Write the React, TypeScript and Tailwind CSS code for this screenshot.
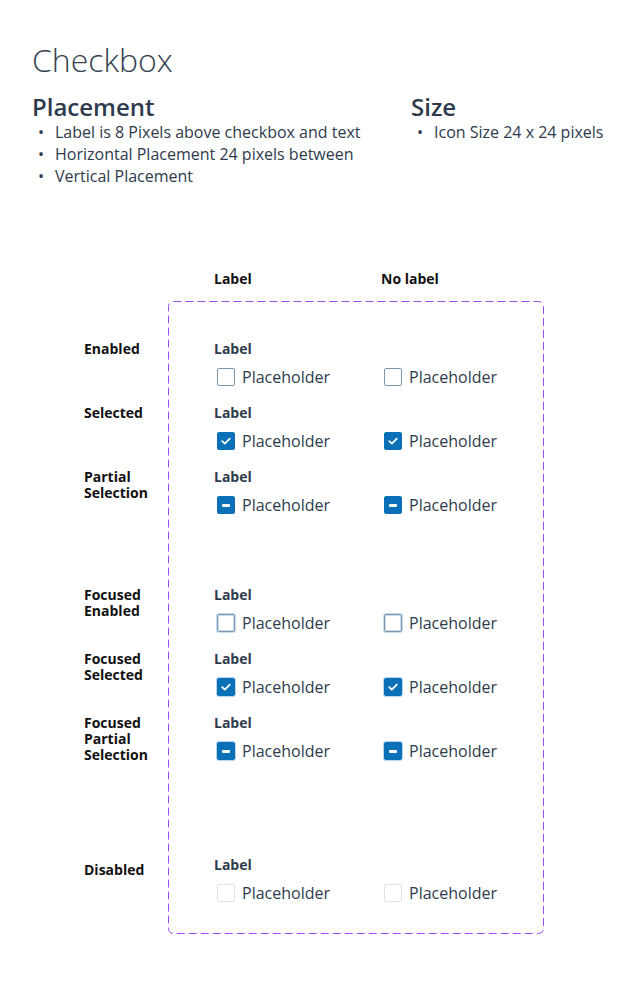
import React from "react";

type Variant = "enabled" | "selected" | "partial" | "disabled";

interface Group {
  name: string[];
  variant: Variant;
  focused?: boolean;
  gap: string;
}

const groups: Group[] = [
  { name: ["Enabled"], variant: "enabled", gap: "" },
  { name: ["Selected"], variant: "selected", gap: "mt-4" },
  { name: ["Partial", "Selection"], variant: "partial", gap: "mt-4" },
  { name: ["Focused", "Enabled"], variant: "enabled", focused: true, gap: "mt-[70px]" },
  { name: ["Focused", "Selected"], variant: "selected", focused: true, gap: "mt-4" },
  { name: ["Focused", "Partial", "Selection"], variant: "partial", focused: true, gap: "mt-4" },
  { name: ["Disabled"], variant: "disabled", gap: "mt-[94px] pt-[5px]" },
];

function Box({ variant, focused }: { variant: Variant; focused?: boolean }) {
  const filled = variant === "selected" || variant === "partial";
  return (
    <span className="flex h-6 w-6 flex-shrink-0 items-center justify-center">
      <span
        className={
          "flex h-[18px] w-[18px] items-center justify-center rounded-[2px] border " +
          (filled
            ? "border-[#0a70b8] bg-[#0a70b8]"
            : variant === "disabled"
            ? "border-[#e1e1e1] bg-white"
            : "border-[#7f97ab] bg-white") +
          (focused
            ? filled
              ? " shadow-[0_0_0_1px_#b9d5ee]"
              : " shadow-[0_0_0_1px_#c9ddef,inset_0_0_0_1px_#c9ddef]"
            : "")
        }
      >
        {variant === "selected" && (
          <svg width="12" height="12" viewBox="0 0 12 12" fill="none">
            <path d="M2.2 6.2 L4.8 8.6 L9.8 3.6" stroke="white" strokeWidth="1.8" strokeLinecap="round" strokeLinejoin="round" />
          </svg>
        )}
        {variant === "partial" && <span className="h-[3px] w-2 rounded-[1px] bg-white" />}
      </span>
    </span>
  );
}

function Option({ variant, focused }: { variant: Variant; focused?: boolean }) {
  return (
    <div className="flex h-6 items-center">
      <Box variant={variant} focused={focused} />
      <span className="ml-1 text-[16px] leading-6 text-[#2e3b4c]">Placeholder</span>
    </div>
  );
}

export default function App() {
  return (
    <div className="min-h-screen w-[636px] bg-white pb-10 pl-8 font-['Open_Sans',sans-serif] text-[#2e3b4c]">
      <h1 className="pt-10 text-[32px] font-light leading-10 text-[#34424f]">Checkbox</h1>

      {/* Guidelines */}
      <div className="mt-[13px] flex">
        <div className="w-[379px]">
          <h2 className="text-[24px] font-semibold leading-7">Placement</h2>
          <ul className="text-[16px] leading-[22px]">
            {["Label is 8 Pixels above checkbox and text", "Horizontal Placement 24 pixels between", "Vertical Placement"].map((t) => (
              <li key={t} className="flex">
                <span className="w-[23px] pl-[6px]">•</span>
                {t}
              </li>
            ))}
          </ul>
        </div>
        <div>
          <h2 className="text-[24px] font-semibold leading-7">Size</h2>
          <ul className="text-[16px] leading-[22px]">
            <li className="flex">
              <span className="w-[23px] pl-[6px]">•</span>
              Icon Size 24 x 24 pixels
            </li>
          </ul>
        </div>
      </div>

      {/* States */}
      <div className="ml-[52px] mt-[84px]">
        <div className="flex pl-[130px] text-[14px] font-bold leading-4 text-[#111]">
          <div className="w-[167px]">Label</div>
          <div>No label</div>
        </div>

        <div className="mt-[14px] flex">
          <div className="w-[84px] pt-[40px] text-[14px] font-bold leading-4 text-[#111]">
            {groups.map((g, i) => (
              <div key={i} className={"h-12 " + g.gap}>
                {g.name.map((n) => (
                  <div key={n}>{n}</div>
                ))}
              </div>
            ))}
          </div>

          <div className="relative w-[376px] pb-[29px] pl-[46px] pt-[40px]">
            <svg className="pointer-events-none absolute inset-0 h-full w-full" fill="none">
              <rect x="0.5" y="0.5" width="375" height="632" rx="5" stroke="#9d4bf5" strokeDasharray="8 4" />
            </svg>
            {groups.map((g, i) => (
              <div key={i} className={"h-12 " + g.gap.replace(" pt-[5px]", "")}>
                <div className="text-[14px] font-bold leading-4 text-[#2e3b4c]">Label</div>
                <div className="mt-2 flex">
                  <div className="w-[167px]">
                    <Option variant={g.variant} focused={g.focused} />
                  </div>
                  <Option variant={g.variant} focused={g.focused} />
                </div>
              </div>
            ))}
          </div>
        </div>
      </div>
    </div>
  );
}
